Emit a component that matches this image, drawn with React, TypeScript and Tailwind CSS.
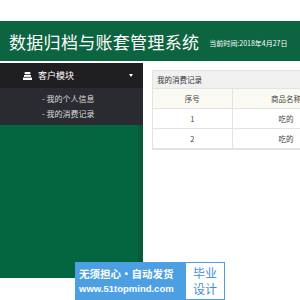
const ROWS = [
  { id: 1, name: "吃的" },
  { id: 2, name: "吃的" },
];

export default function App() {
  return (
    <div
      className="relative h-[300px] w-[300px] overflow-hidden bg-white"
      style={{ fontFamily: '"Noto Sans CJK SC", "Noto Sans", sans-serif' }}
    >
      {/* 顶部留白 */}
      <div className="h-[21px] bg-white" />

      {/* 标题栏 */}
      <div className="flex h-[40px] items-center overflow-hidden bg-[#0c6440] pl-[9px]">
        <h1 className="whitespace-nowrap text-[17px] leading-none tracking-[0.3px] text-white">
          数据归档与账套管理系统
        </h1>
        <span className="ml-[10px] mt-[5px] whitespace-nowrap text-[7px] leading-none text-white">
          当前时间:2018年4月27日
        </span>
      </div>

      <div className="mt-[2px] flex">
        {/* 左侧菜单 */}
        <div className="flex h-[215px] w-[143px] shrink-0 flex-col">
          <div className="flex h-[25px] items-center bg-[#1f1f22] pl-[23px] pr-[10px] text-white">
            <svg width="9" height="8" viewBox="0 0 9 8" fill="white">
              <rect x="1.5" y="0" width="6" height="2.2" rx="1" />
              <rect x="1" y="3" width="7" height="1.8" />
              <rect x="0" y="5.6" width="9" height="2.4" />
            </svg>
            <span className="ml-[6px] text-[9px] leading-none">客户模块</span>
            <span className="ml-auto h-0 w-0 border-x-[2.5px] border-t-[3px] border-x-transparent border-t-white" />
          </div>
          <div className="flex h-[37px] flex-col justify-center gap-[7px] bg-[#2a2a31] pl-[42px] text-[8px] leading-none text-[#dcdcdc]">
            <span>- 我的个人信息</span>
            <span>- 我的消费记录</span>
          </div>
          <div className="flex-1 border-r-[5px] border-[#055a39] bg-[#036640]" />
        </div>

        {/* 右侧内容 */}
        <div className="ml-[9px] mt-[7px] min-w-0 flex-1 overflow-hidden">
          <div className="w-[200px] border border-[#e3e3e3]">
            <div className="flex h-[17px] items-center bg-[#f0f0f0] pl-[4px] text-[7.5px] leading-none text-[#333]">
              我的消费记录
            </div>
            <table className="w-full table-fixed border-collapse whitespace-nowrap text-[7.5px] leading-none text-[#444]">
              <thead>
                <tr className="h-[20px] bg-[#fbfaf2]">
                  <th className="w-[79px] border border-l-0 border-[#e3e3e3] font-normal">序号</th>
                  <th className="w-[108px] border border-[#e3e3e3] font-normal">商品名称</th>
                  <th className="border border-r-0 border-[#e3e3e3] font-normal" />
                </tr>
              </thead>
              <tbody>
                {ROWS.map((r) => (
                  <tr key={r.id} className="h-[20px]">
                    <td className="border border-l-0 border-[#e3e3e3] text-center">{r.id}</td>
                    <td className="border border-[#e3e3e3] text-center">{r.name}</td>
                    <td className="border border-r-0 border-[#e3e3e3]" />
                  </tr>
                ))}
              </tbody>
            </table>
          </div>
        </div>
      </div>

      {/* 水印 */}
      <div className="absolute left-[75px] top-[262px] flex h-[38px] w-[150px] bg-[#4d9fe3]">
        <div className="flex w-[110px] shrink-0 flex-col justify-center gap-[4px] pl-[4px] text-white">
          <span className="whitespace-nowrap text-[10.5px] font-bold leading-none">无须担心·自动发货</span>
          <span
            className="whitespace-nowrap text-[9.5px] font-bold leading-none"
            style={{ fontFamily: '"Liberation Sans", Arial, sans-serif' }}
          >
            www.51topmind.com
          </span>
        </div>
        <div className="m-[1px] flex flex-1 items-center justify-center bg-white text-center text-[12px] leading-[16px] text-[#3f8fd6]">
          <span>
            毕业
            <br />
            设计
          </span>
        </div>
      </div>
    </div>
  );
}
